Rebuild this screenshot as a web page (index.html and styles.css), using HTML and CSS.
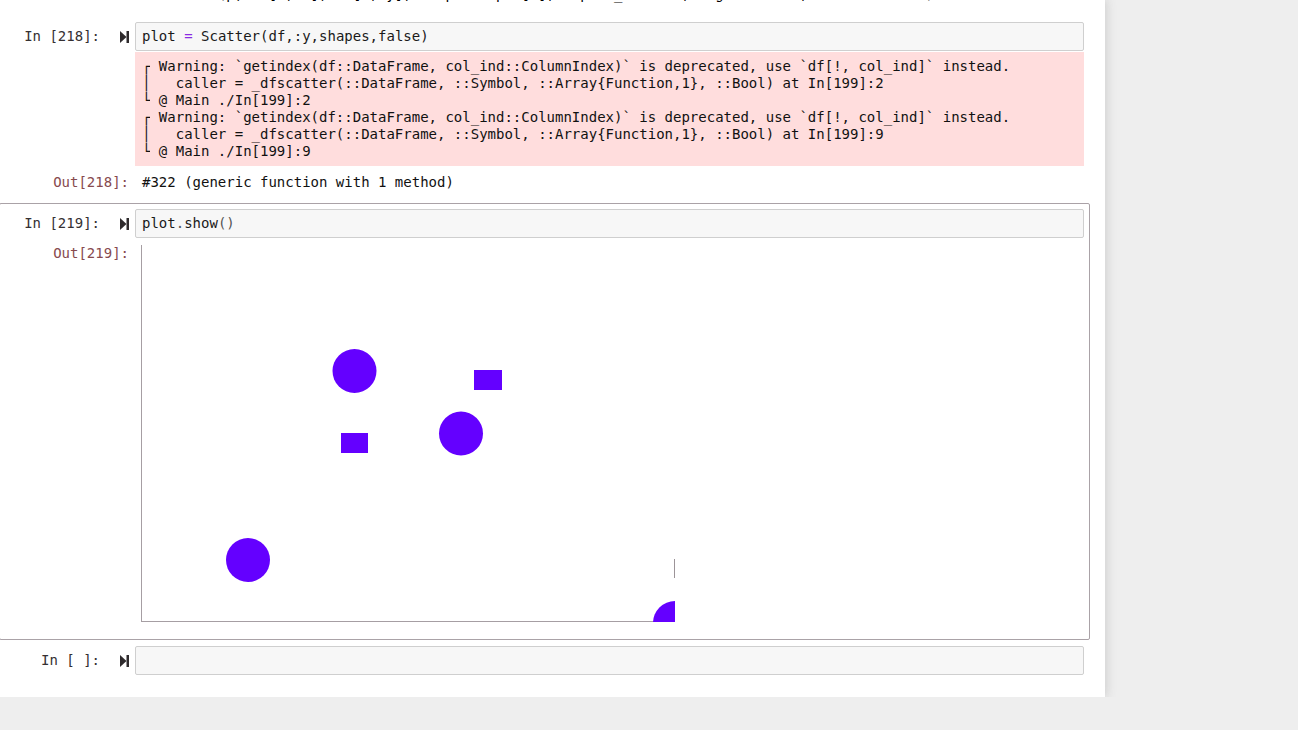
FILE: index.html
```html
<!DOCTYPE html>
<html>
<head>
<meta charset="utf-8">
<link rel="stylesheet" href="styles.css">
</head>
<body>
<div class="notebook">
  <div class="prev-out"><span class="prev-line">  scatter(p, df[!,:x], df[!,:y]; shape=shapes[i], aspect_ratio=1, legend=false, markersize=14)</span></div>

  <div class="cell">
    <div class="row">
      <div class="prompt-in"><span>In [218]:</span><svg class="run" width="9" height="12" viewBox="0 0 9 12"><polygon points="0,0 6.5,6 0,12"/><rect x="6.5" y="0" width="2.5" height="12"/></svg></div>
      <div class="input-area"><span>plot </span><span class="op">=</span><span> Scatter(df,:y,shapes,false)</span></div>
    </div>
    <div class="row">
      <div class="prompt-blank"></div>
      <pre class="stderr"><span class="bx">┌</span> Warning: `getindex(df::DataFrame, col_ind::ColumnIndex)` is deprecated, use `df[!, col_ind]` instead.
<span class="bx">│</span>   caller = _dfscatter(::DataFrame, ::Symbol, ::Array{Function,1}, ::Bool) at In[199]:2
<span class="bx">└</span> @ Main ./In[199]:2
<span class="bx">┌</span> Warning: `getindex(df::DataFrame, col_ind::ColumnIndex)` is deprecated, use `df[!, col_ind]` instead.
<span class="bx">│</span>   caller = _dfscatter(::DataFrame, ::Symbol, ::Array{Function,1}, ::Bool) at In[199]:9
<span class="bx">└</span> @ Main ./In[199]:9</pre>
    </div>
    <div class="row out-row">
      <div class="prompt-out">Out[218]:</div>
      <pre class="out-text">#322 (generic function with 1 method)</pre>
    </div>
  </div>

  <div class="cell selected">
    <div class="row">
      <div class="prompt-in"><span>In [219]:</span><svg class="run" width="9" height="12" viewBox="0 0 9 12"><polygon points="0,0 6.5,6 0,12"/><rect x="6.5" y="0" width="2.5" height="12"/></svg></div>
      <div class="input-area"><span>plot</span><span class="dot">.</span><span>show</span><span class="paren">()</span></div>
    </div>
    <div class="row plot-row">
      <div class="prompt-out">Out[219]:</div>
      <div class="plot">
        <svg width="534" height="377" viewBox="0 0 534 377">
          <line class="axis" x1="0.5" y1="0" x2="0.5" y2="377"/>
          <line class="axis" x1="0" y1="376.5" x2="534" y2="376.5"/>
          <line class="tick" x1="533.5" y1="314" x2="533.5" y2="333"/>
          <circle class="pt" cx="213.5" cy="126" r="22"/>
          <rect class="pt" x="333" y="125" width="28" height="20"/>
          <circle class="pt" cx="320" cy="188.5" r="22"/>
          <rect class="pt" x="200" y="188" width="27" height="20"/>
          <circle class="pt" cx="107" cy="315" r="22"/>
          <circle class="pt" cx="534" cy="378" r="22"/>
        </svg>
      </div>
    </div>
  </div>

  <div class="cell">
    <div class="row">
      <div class="prompt-in"><span>In [ ]:</span><svg class="run" width="9" height="12" viewBox="0 0 9 12"><polygon points="0,0 6.5,6 0,12"/><rect x="6.5" y="0" width="2.5" height="12"/></svg></div>
      <div class="input-area empty"></div>
    </div>
  </div>
</div>
</body>
</html>
```

FILE: styles.css
```css
html, body {
  margin: 0;
  padding: 0;
}
body {
  background: #eeeeee;
  overflow: hidden;
  font-family: "DejaVu Sans Mono", "Liberation Mono", monospace;
  font-size: 14px;
  line-height: 17px;
  color: #1a1a1a;
}
.notebook {
  width: 1091px;
  margin-left: -16px;
  padding: 0 15px 16px 15px;
  background: #ffffff;
  box-shadow: 0 0 10px 1px rgba(87, 87, 87, 0.22);
}
.prev-out {
  height: 3px;
  overflow: hidden;
  display: flex;
  align-items: flex-end;
  padding-left: 143px;
  margin-bottom: 13px;
}
.prev-line {
  white-space: pre;
  color: #000000;
}
.cell {
  border: 1px solid transparent;
  border-radius: 2px;
  padding: 5px;
}
.cell.selected {
  border-color: #aaa2a7;
}
.row {
  display: flex;
  align-items: flex-start;
}
.prompt-in {
  width: 130px;
  flex: none;
  display: flex;
  justify-content: flex-end;
  align-items: center;
  padding-top: 6px;
  color: #353032;
  white-space: pre;
}
.run {
  margin-left: 20px;
  margin-right: 6px;
  fill: #2e2a2c;
}
.prompt-blank {
  width: 130px;
  flex: none;
}
.prompt-out {
  width: 124px;
  padding-right: 6px;
  flex: none;
  text-align: right;
  color: #874a4e;
}
.input-area {
  flex: 1;
  background: #f7f7f7;
  border: 1px solid #cfcfcf;
  border-radius: 2px;
  padding: 5px 6px;
  white-space: pre;
  height: 17px;
}
.op {
  color: #8a2be2;
}
.dot {
  color: #555;
}
.paren {
  color: #555;
}
.stderr {
  flex: 1;
  margin: 1px 0 0 0;
  padding: 6px 7px;
  background: #ffdddd;
  font-family: inherit;
  font-size: 14px;
  line-height: 17px;
  color: #111;
  white-space: pre;
}
.bx {
  display: inline-block;
  width: 1ch;
  overflow: hidden;
  vertical-align: top;
}
.out-row {
  padding: 8px 0 6px 0;
}
.out-text {
  margin: 0;
  padding-left: 7px;
  font-family: inherit;
  font-size: 14px;
  line-height: 17px;
  color: #111;
}
.plot-row {
  margin-top: 7px;
}
.plot-row .prompt-out {
  margin-top: 0;
}
.plot {
  margin: 0 0 12px 6px;
  width: 534px;
  height: 377px;
}
.plot svg {
  display: block;
  overflow: hidden;
}
.axis {
  stroke: #a69ea3;
  stroke-width: 1;
}
.tick {
  stroke: #9c9498;
  stroke-width: 1;
}
.pt {
  fill: #6400ff;
}
```
